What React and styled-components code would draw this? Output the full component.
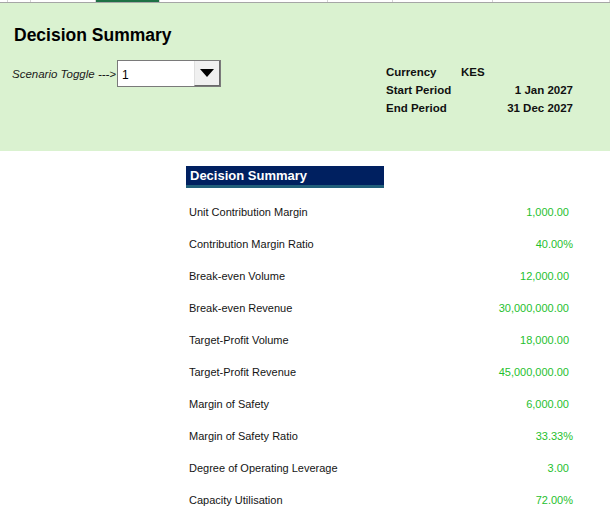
import styled, { createGlobalStyle } from "styled-components";

const GlobalStyle = createGlobalStyle`
  html, body {
    margin: 0;
    padding: 0;
    background: #ffffff;
  }
  body {
    font-family: "Liberation Sans", Arial, sans-serif;
    color: #1a1a1a;
  }
`;

const columns = [
  { width: 8 },
  { width: 23 },
  { width: 65 },
  { width: 64, active: true },
  { width: 168 },
  { width: 65 },
  { width: 100 },
  { width: 117 },
];

const metrics = [
  { label: "Unit Contribution Margin", value: "1,000.00" },
  { label: "Contribution Margin Ratio", value: "40.00%", percent: true },
  { label: "Break-even Volume", value: "12,000.00" },
  { label: "Break-even Revenue", value: "30,000,000.00" },
  { label: "Target-Profit Volume", value: "18,000.00" },
  { label: "Target-Profit Revenue", value: "45,000,000.00" },
  { label: "Margin of Safety", value: "6,000.00" },
  { label: "Margin of Safety Ratio", value: "33.33%", percent: true },
  { label: "Degree of Operating Leverage", value: "3.00" },
  { label: "Capacity Utilisation", value: "72.00%", percent: true },
];

export default function App() {
  return (
    <>
      <GlobalStyle />
      <Sheet>
        <ColumnStrip>
          {columns.map((col, i) => (
            <ColumnCell key={i} $width={col.width} $active={col.active} />
          ))}
        </ColumnStrip>

        <HeaderPanel>
          <LeftBlock>
            <Title>Decision Summary</Title>
            <ToggleRow>
              <ToggleLabel>Scenario Toggle ---&gt;</ToggleLabel>
              <Dropdown>
                <DropdownValue>1</DropdownValue>
                <DropdownButton>
                  <svg width="14" height="8" viewBox="0 0 14 8">
                    <path d="M0 0 L14 0 L7 8 Z" fill="#000" />
                  </svg>
                </DropdownButton>
              </Dropdown>
            </ToggleRow>
          </LeftBlock>

          <InfoGrid>
            <InfoLabel>Currency</InfoLabel>
            <InfoValue $align="start">KES</InfoValue>
            <InfoLabel>Start Period</InfoLabel>
            <InfoValue>1 Jan 2027</InfoValue>
            <InfoLabel>End Period</InfoLabel>
            <InfoValue>31 Dec 2027</InfoValue>
          </InfoGrid>
        </HeaderPanel>

        <SummarySection>
          <SummaryTable>
            <TableHeader>Decision Summary</TableHeader>
            <Rows>
              {metrics.map((m) => (
                <MetricRow key={m.label}>
                  <MetricLabel>{m.label}</MetricLabel>
                  <MetricValue $percent={m.percent}>{m.value}</MetricValue>
                </MetricRow>
              ))}
            </Rows>
          </SummaryTable>
        </SummarySection>
      </Sheet>
    </>
  );
}

const Sheet = styled.div`
  width: 610px;
  height: 517px;
  overflow: hidden;
  background: #ffffff;
`;

const ColumnStrip = styled.div`
  display: flex;
  height: 2px;
  border-bottom: 1px solid #a6a6a6;
  background: #ffffff;
`;

const ColumnCell = styled.div`
  flex: 0 0 ${(p) => p.$width}px;
  box-sizing: border-box;
  border-right: 1px solid #d4d4d4;
  background: ${(p) => (p.$active ? "#1e7145" : "transparent")};
`;

const HeaderPanel = styled.div`
  height: 148px;
  background: #daf2d0;
  display: flex;
  justify-content: space-between;
  box-sizing: border-box;
  padding: 21px 37px 0 12px;
`;

const LeftBlock = styled.div`
  display: flex;
  flex-direction: column;
`;

const Title = styled.h1`
  margin: 0 0 0 2px;
  font-size: 17.5px;
  line-height: 22px;
  font-weight: 700;
  color: #000000;
`;

const ToggleRow = styled.div`
  display: flex;
  align-items: center;
  margin-top: 14px;
`;

const ToggleLabel = styled.span`
  font-size: 11.5px;
  font-style: italic;
  color: #1a1a1a;
  margin-right: 1px;
`;

const Dropdown = styled.div`
  display: flex;
  width: 104px;
  height: 27px;
  box-sizing: border-box;
  border: 1px solid #7a7a7a;
  background: #ffffff;
`;

const DropdownValue = styled.span`
  flex: 1;
  display: flex;
  align-items: center;
  padding: 2px 0 0 4px;
  font-size: 12px;
  color: #000000;
`;

const DropdownButton = styled.span`
  width: 24px;
  display: flex;
  align-items: center;
  justify-content: center;
  background: #f0f0f0;
  border-left: 1px solid #e0e0e0;
  border-bottom: 1px solid #6a6a6a;
  border-right: 1px solid #6a6a6a;
`;

const InfoGrid = styled.div`
  display: grid;
  grid-template-columns: 75px 112px;
  grid-auto-rows: 18px;
  align-items: center;
  margin-top: 39px;
  align-self: flex-start;
`;

const InfoLabel = styled.span`
  font-size: 11.5px;
  font-weight: 700;
  color: #111111;
`;

const InfoValue = styled.span`
  font-size: 11.5px;
  font-weight: 700;
  color: #111111;
  justify-self: ${(p) => p.$align || "end"};
`;

const SummarySection = styled.div`
  padding: 15px 0 0 186px;
`;

const SummaryTable = styled.div`
  width: 387px;
`;

const TableHeader = styled.div`
  width: 198px;
  height: 22px;
  box-sizing: border-box;
  background: #002060;
  border-bottom: 3px solid #215f7a;
  color: #ffffff;
  font-size: 13px;
  font-weight: 700;
  line-height: 19px;
  padding-left: 4px;
`;

const Rows = styled.div`
  display: flex;
  flex-direction: column;
  margin-top: 8px;
`;

const MetricRow = styled.div`
  height: 32px;
  display: flex;
  align-items: center;
  justify-content: space-between;
  padding-left: 3px;
`;

const MetricLabel = styled.span`
  font-size: 11px;
  color: #141414;
`;

const MetricValue = styled.span`
  font-size: 11px;
  color: #1fbf2e;
  padding-right: ${(p) => (p.$percent ? "0" : "4px")};
`;
